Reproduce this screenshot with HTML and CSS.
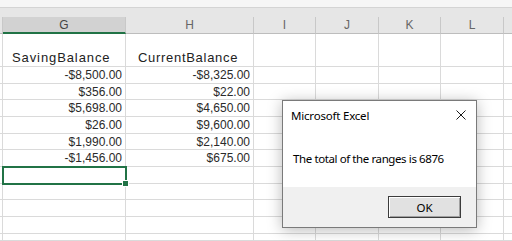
FILE: index.html
```html
<!DOCTYPE html>
<html>
<head>
<meta charset="utf-8">
<link rel="stylesheet" href="styles.css">
</head>
<body>
<div class="app">
  <div class="strip"></div>
  <div class="band"></div>
  <div class="sheet">
    <div class="h stub"></div><div class="h sel">G</div><div class="h">H</div><div class="h">I</div><div class="h">J</div><div class="h">K</div><div class="h">L</div><div class="h last"></div>

    <div class="c"></div><div class="c t">SavingBalance</div><div class="c t t2">CurrentBalance</div><div class="c"></div><div class="c"></div><div class="c"></div><div class="c"></div><div class="c last"></div>
    <div class="c"></div><div class="c n">-$8,500.00</div><div class="c n">-$8,325.00</div><div class="c"></div><div class="c"></div><div class="c"></div><div class="c"></div><div class="c last"></div>
    <div class="c"></div><div class="c n">$356.00</div><div class="c n">$22.00</div><div class="c"></div><div class="c"></div><div class="c"></div><div class="c"></div><div class="c last"></div>
    <div class="c"></div><div class="c n">$5,698.00</div><div class="c n">$4,650.00</div><div class="c"></div><div class="c"></div><div class="c"></div><div class="c"></div><div class="c last"></div>
    <div class="c"></div><div class="c n">$26.00</div><div class="c n">$9,600.00</div><div class="c"></div><div class="c"></div><div class="c"></div><div class="c"></div><div class="c last"></div>
    <div class="c"></div><div class="c n">$1,990.00</div><div class="c n">$2,140.00</div><div class="c"></div><div class="c"></div><div class="c"></div><div class="c"></div><div class="c last"></div>
    <div class="c"></div><div class="c n">-$1,456.00</div><div class="c n">$675.00</div><div class="c"></div><div class="c"></div><div class="c"></div><div class="c"></div><div class="c last"></div>
    <div class="c"></div><div class="c active"></div><div class="c"></div><div class="c"></div><div class="c"></div><div class="c"></div><div class="c"></div><div class="c last"></div>
    <div class="c"></div><div class="c"></div><div class="c"></div><div class="c"></div><div class="c"></div><div class="c"></div><div class="c"></div><div class="c last"></div>
    <div class="c"></div><div class="c"></div><div class="c"></div><div class="c"></div><div class="c"></div><div class="c"></div><div class="c"></div><div class="c last"></div>
    <div class="c"></div><div class="c"></div><div class="c"></div><div class="c"></div><div class="c"></div><div class="c"></div><div class="c"></div><div class="c last"></div>
    <div class="c"></div><div class="c"></div><div class="c"></div><div class="c"></div><div class="c"></div><div class="c"></div><div class="c"></div><div class="c last"></div>
  </div>

  <div class="dialog">
    <div class="dtitle">
      <span>Microsoft Excel</span>
      <svg class="close" width="10" height="10" viewBox="0 0 10 10"><path d="M0.5 0.5 L9.5 9.5 M9.5 0.5 L0.5 9.5" stroke="#1a1a1a" stroke-width="1" fill="none"/></svg>
    </div>
    <div class="dbody">The total of the ranges is 6876</div>
    <div class="dfoot"><div class="btn">OK</div></div>
  </div>
</div>
</body>
</html>
```

FILE: styles.css
```css
html, body {
  margin: 0;
  padding: 0;
  background: #fff;
}
.app {
  position: relative;
  width: 512px;
  height: 241px;
  overflow: hidden;
  font-family: "Liberation Sans", Arial, sans-serif;
}
.strip {
  height: 8px;
  box-sizing: border-box;
  background: #f6f6f6;
  border-bottom: 1px solid #d4d4d4;
}
.band {
  height: 9px;
  background: #e6e6e6;
}
.sheet {
  display: grid;
  grid-template-columns: 3px 123px 128px 62px 63px 62px 63px 8px;
  grid-template-rows: 17px 33px 17px 16px 17px 17px 16px 17px 17px 16px 17px 17px 7px;
}
.h {
  box-sizing: border-box;
  background: #e6e6e6;
  border-right: 1px solid #c8c8c8;
  border-bottom: 1px solid #bdbdbd;
  display: flex;
  align-items: center;
  justify-content: center;
  font-size: 12px;
  color: #666;
}
.h.sel {
  background: #d2d2d2;
  border-bottom: 2px solid #217346;
  color: #444;
}
.h.last {
  border-right: none;
}
.c {
  box-sizing: border-box;
  border-right: 1px solid #dadada;
  border-bottom: 1px solid #dadada;
  font-size: 12px;
  color: #2a2a2a;
  display: flex;
  align-items: center;
  white-space: nowrap;
}
.c.last {
  border-right: none;
}
.n {
  justify-content: flex-end;
  padding-right: 3px;
}
.t {
  align-items: flex-end;
  padding-left: 9px;
  padding-bottom: 1px;
  font-size: 13px;
  letter-spacing: 0.9px;
  color: #222;
}
.t2 {
  padding-left: 12px;
  letter-spacing: 0.7px;
}
.active {
  position: relative;
  z-index: 1;
  outline: 2px solid #217346;
  outline-offset: -1px;
}
.active::after {
  content: "";
  position: absolute;
  right: -4px;
  bottom: -4px;
  width: 5px;
  height: 5px;
  background: #217346;
  border: 1px solid #fff;
}
.dialog {
  position: absolute;
  left: 282px;
  top: 100px;
  width: 195px;
  height: 128px;
  box-sizing: border-box;
  border: 1px solid #7a7a7a;
  background: #fff;
  box-shadow: 0 2px 14px rgba(0, 0, 0, 0.28);
  display: flex;
  flex-direction: column;
  font-family: "Noto Sans", "Open Sans", sans-serif;
  color: #000;
  z-index: 5;
}
.dtitle {
  height: 28px;
  display: flex;
  align-items: center;
  justify-content: space-between;
  padding: 0 10px 0 8px;
  font-size: 11.5px;
  letter-spacing: -0.2px;
}
.close {
  display: block;
}
.dbody {
  flex: 1;
  padding: 22px 0 0 10px;
  font-size: 11.5px;
  line-height: 16px;
  letter-spacing: -0.4px;
}
.dfoot {
  height: 40px;
  background: #f0f0f0;
  display: flex;
  justify-content: flex-end;
  align-items: center;
  padding-right: 15px;
}
.btn {
  width: 73px;
  height: 22px;
  box-sizing: border-box;
  border: 1px solid #3c3c3c;
  box-shadow: inset 1px 1px 0 #fff, inset -1px -1px 0 #a0a0a0;
  background: #e1e1e1;
  display: flex;
  align-items: center;
  justify-content: center;
  font-size: 11.5px;
}
```
